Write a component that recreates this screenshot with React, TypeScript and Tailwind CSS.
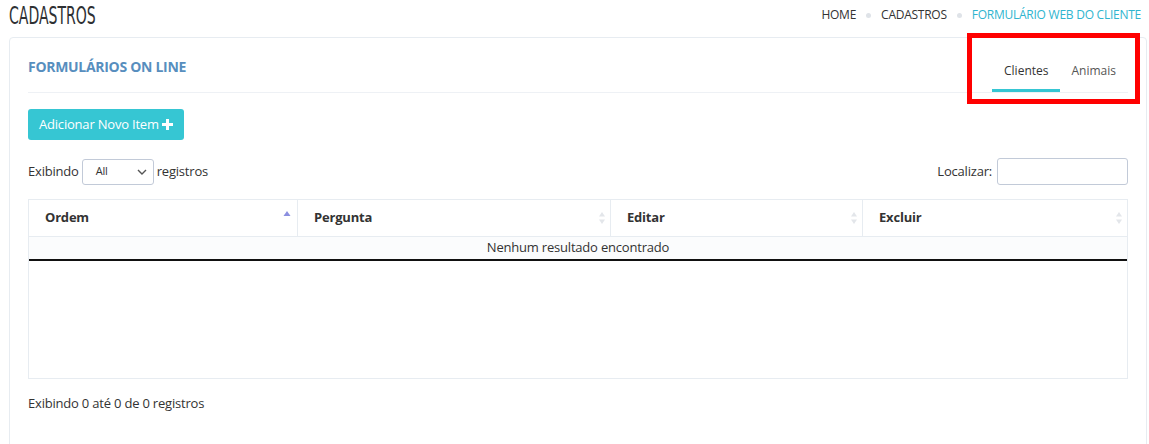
import React from "react";

function SortIcon({ active }: { active?: boolean }) {
  if (active) {
    return (
      <svg width="8" height="10" viewBox="0 0 8 10" className="absolute right-[6px] top-[10px]">
        <path d="M4 1 L7.5 6 L0.5 6 Z" fill="#8b8fe0" />
      </svg>
    );
  }
  return (
    <svg width="8" height="14" viewBox="0 0 8 14" className="absolute right-[4px] top-[11px]">
      <path d="M4 1 L7 5.5 L1 5.5 Z" fill="#e3e6ea" />
      <path d="M4 13 L7 8.5 L1 8.5 Z" fill="#e3e6ea" />
    </svg>
  );
}

function Dot() {
  return <span className="mx-[10px] inline-block h-[5px] w-[5px] rounded-full bg-[#dfe3e8] align-middle" />;
}

export default function App() {
  const cols = [
    { label: "Ordem", w: "w-[269px]", active: true },
    { label: "Pergunta", w: "w-[313px]" },
    { label: "Editar", w: "w-[252px]" },
    { label: "Excluir", w: "flex-1" },
  ];

  return (
    <div
      className="relative h-[444px] w-[1149px] overflow-hidden bg-white text-[#333]"
      style={{ fontFamily: '"Open Sans", "Noto Sans", sans-serif' }}
    >
      {/* page heading + breadcrumb */}
      <div className="flex h-[37px] items-start justify-between pl-[9px] pr-[8px]">
        <h1
          className="mt-[3px] origin-left scale-x-[0.65] whitespace-nowrap text-[24px] leading-[26px] text-[#2e3033]"
          style={{ fontFamily: '"DejaVu Sans Condensed", "DejaVu Sans", sans-serif' }}
        >
          CADASTROS
        </h1>
        <div className="mt-[6px] flex items-center text-[12px] leading-[18px] tracking-[-0.25px]">
          <span className="text-[#333]">HOME</span>
          <Dot />
          <span className="text-[#333]">CADASTROS</span>
          <Dot />
          <span className="text-[#2fb5cf]">FORMULÁRIO WEB DO CLIENTE</span>
        </div>
      </div>

      {/* portlet */}
      <div className="ml-[9px] mr-[2px] h-[420px] rounded-[4px] border border-[#e7ecf1] px-[18px]">
        <div className="flex h-[55px] items-stretch justify-between border-b border-[#eef1f5]">
          <div className="flex items-center pt-[3px] text-[14px] font-bold tracking-[-0.3px] text-[#578ebe]">
            FORMULÁRIOS ON LINE
          </div>
          <div className="flex items-end text-[12px]">
            <div className="ml-[2px] border-b-[3px] border-[#36c6d3] px-[12px] pb-[9px] text-[#333]">Clientes</div>
            <div className="pl-[11px] pr-[12px] pb-[12px] text-[#555]">Animais</div>
          </div>
        </div>

        <div className="pt-[16px]">
          <button className="flex h-[31px] items-center gap-[3px] rounded-[3px] bg-[#36c6d3] px-[11px] text-[13px] tracking-[-0.2px] text-white">
            Adicionar Novo Item
            <svg width="11" height="11" viewBox="0 0 11 11">
              <path d="M4 0h3v4h4v3H7v4H4V7H0V4h4z" fill="#fff" />
            </svg>
          </button>
        </div>

        <div className="mt-[18px] flex h-[27px] items-center justify-between text-[13px] tracking-[-0.2px]">
          <div className="flex items-center gap-[3px]">
            <span>Exibindo</span>
            <div className="flex h-[26px] w-[72px] items-center justify-between rounded-[3px] border border-[#c2cad8] pl-[13px] pr-[6px] text-[11px]">
              <span>All</span>
              <svg width="10" height="6" viewBox="0 0 10 6">
                <path d="M1 1 L5 5 L9 1" stroke="#555" strokeWidth="1.4" fill="none" />
              </svg>
            </div>
            <span>registros</span>
          </div>
          <div className="flex items-center gap-[5px]">
            <span>Localizar:</span>
            <div className="h-[27px] w-[131px] rounded-[3px] border border-[#c2cad8]" />
          </div>
        </div>

        {/* table */}
        <div className="mt-[14px] h-[180px] border border-[#e7ecf1]">
          <div className="flex h-[37px] border-b border-[#e7ecf1] text-[13px] font-bold tracking-[-0.2px]">
            {cols.map((c, i) => (
              <div
                key={c.label}
                className={`relative flex items-center pl-[16px] ${c.w} ${i < cols.length - 1 ? "border-r border-[#e7ecf1]" : ""}`}
              >
                {c.label}
                <SortIcon active={c.active} />
              </div>
            ))}
          </div>
          <div className="flex h-[24px] items-center justify-center border-b-[2px] border-[#111] bg-[#fbfcfd] text-[13px] tracking-[-0.2px]">
            Nenhum resultado encontrado
          </div>
        </div>

        <div className="mt-[15px] text-[13px] tracking-[-0.2px]">Exibindo 0 até 0 de 0 registros</div>
      </div>

      {/* highlight frame around the tabs */}
      <div className="absolute left-[967px] top-[33px] h-[71px] w-[173px] border-[5px] border-[#ff0000]" />
    </div>
  );
}
